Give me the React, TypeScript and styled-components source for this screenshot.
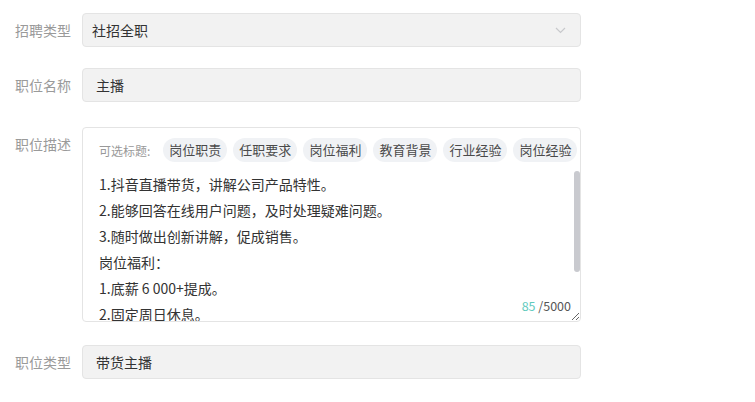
import {FunctionComponent} from 'react'
import styled, {createGlobalStyle} from 'styled-components'

const GlobalStyle = createGlobalStyle`
  html, body {
    margin: 0;
    padding: 0;
    background: #fff;
    font-family: "Noto Sans CJK SC", "Noto Sans", sans-serif;
  }
`

const Form = styled.div`
  width: 755px;
  height: 402px;
  padding: 13px 0 0 15px;
  box-sizing: border-box;
  overflow: hidden;
`

const Row = styled.div<{$gap: number}>`
  display: flex;
  align-items: flex-start;
  margin-bottom: ${p => p.$gap}px;
`

const Label = styled.div`
  width: 67px;
  flex: none;
  height: 34px;
  line-height: 34px;
  font-size: 14px;
  color: #9a9a9a;
  white-space: nowrap;
`

const Field = styled.div`
  position: relative;
  width: 499px;
  height: 34px;
  box-sizing: border-box;
  border: 1px solid #e4e4e4;
  border-radius: 4px;
  background: #f2f2f2;
  display: flex;
  align-items: center;
  font-size: 14px;
  color: #333;
`

const FieldText = styled.span<{$indent: number}>`
  padding-left: ${p => p.$indent}px;
  flex: 1;
`

const Chevron = styled.svg`
  margin-right: 14px;
  flex: none;
`

const EditorBox = styled.div`
  position: relative;
  width: 499px;
  height: 195px;
  box-sizing: border-box;
  border: 1px solid #e4e4e4;
  border-radius: 4px;
  background: #fff;
  display: flex;
  flex-direction: column;
`

const ChipBar = styled.div`
  display: flex;
  align-items: center;
  gap: 6px;
  padding: 10px 0 0 16px;
  height: 24px;
  flex: none;
`

const ChipHint = styled.span`
  font-size: 12px;
  color: #999;
  margin-right: 7px;
  white-space: nowrap;
`

const Chip = styled.span`
  height: 24px;
  line-height: 24px;
  padding: 0 6px;
  border-radius: 12px;
  background: #f0f2f5;
  color: #4a4a4a;
  font-size: 13px;
  white-space: nowrap;
`

const Content = styled.textarea`
  flex: 1;
  margin-top: 6px;
  border: none;
  outline: none;
  resize: both;
  background: transparent;
  padding: 3px 0 0 16px;
  font-family: inherit;
  font-size: 14px;
  line-height: 26px;
  color: #333;
  overflow-y: scroll;
  border-radius: 0 0 4px 4px;
`

/* headless capture hides native scrollbars, so the thumb is drawn over the box */
const ScrollThumb = styled.div`
  position: absolute;
  right: 0;
  top: 43px;
  width: 6px;
  height: 101px;
  border-radius: 3px;
  background: #c9cacf;
`

const Counter = styled.div`
  position: absolute;
  right: 9px;
  bottom: 6px;
  font-size: 12.5px;
  color: #555;
  background: #fff;
`

const Count = styled.span`
  color: #5fcabd;
`

const chips = ['岗位职责', '任职要求', '岗位福利', '教育背景', '行业经验', '岗位经验']

const description = [
    '1.抖音直播带货，讲解公司产品特性。',
    '2.能够回答在线用户问题，及时处理疑难问题。',
    '3.随时做出创新讲解，促成销售。',
    '岗位福利：',
    '1.底薪 6 000+提成。',
    '2.固定周日休息。',
    '3.缴纳五险一金。',
    '4.节日福利。',
].join('\n')

const App: FunctionComponent = () => {
    return (
        <>
            <GlobalStyle/>
            <Form>
                <Row $gap={21}>
                    <Label>招聘类型</Label>
                    <Field>
                        <FieldText $indent={9}>社招全职</FieldText>
                        <Chevron width="11" height="7" viewBox="0 0 11 7">
                            <path d="M1 1l4.5 4.5L10 1" fill="none" stroke="#c8c9cc" strokeWidth="1.2"/>
                        </Chevron>
                    </Field>
                </Row>
                <Row $gap={25}>
                    <Label>职位名称</Label>
                    <Field>
                        <FieldText $indent={13}>主播</FieldText>
                    </Field>
                </Row>
                <Row $gap={23}>
                    <Label>职位描述</Label>
                    <EditorBox>
                        <ChipBar>
                            <ChipHint>可选标题:</ChipHint>
                            {chips.map(c => <Chip key={c}>{c}</Chip>)}
                        </ChipBar>
                        <Content readOnly defaultValue={description}/>
                        <ScrollThumb/>
                        <Counter><Count>85</Count> /5000</Counter>
                    </EditorBox>
                </Row>
                <Row $gap={0}>
                    <Label>职位类型</Label>
                    <Field>
                        <FieldText $indent={13}>带货主播</FieldText>
                    </Field>
                </Row>
            </Form>
        </>
    )
}

export default App
